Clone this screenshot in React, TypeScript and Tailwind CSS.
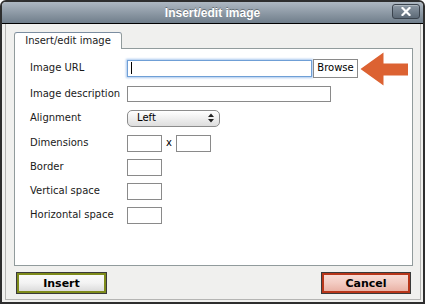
import React from "react";

const font = { fontFamily: '"DejaVu Sans", Verdana, sans-serif' };

function Row({ label, children, className = "" }: { label: string; children?: React.ReactNode; className?: string }) {
  return (
    <div className={`flex items-center h-[24px] ${className}`}>
      <div className="w-[97px] text-[10px] text-[#1a1a1a] leading-none">{label}</div>
      {children}
    </div>
  );
}

function SmallInput() {
  return <div className="w-[35px] h-[17px] border border-[#8a8a8a] bg-white" />;
}

export default function App() {
  return (
    <div className="w-[426px] h-[305px] bg-white" style={font}>
      <div className="relative w-[425px] h-[304px] flex flex-col border-2 border-[#2e2e2e] rounded-t-[6px] overflow-hidden bg-[#f0f0ee]">
        {/* Title bar */}
        <div className="relative h-[22px] shrink-0 flex items-center justify-center border-b border-black bg-gradient-to-b from-[#aeb8c2] to-[#707e8b]">
          <span
            className="text-white font-bold text-[12px] leading-none"
            style={{ fontFamily: '"Liberation Sans", Arial, sans-serif', textShadow: "0 -1px 0 rgba(0,0,0,0.35)" }}
          >
            Insert/edit image
          </span>
          <div className="absolute right-[3px] top-[2px] w-[28px] h-[15px] rounded-[3px] border border-[#3b444e] bg-gradient-to-b from-[#8e9aa6] to-[#5c6976] flex items-center justify-center shadow-[inset_0_1px_0_rgba(255,255,255,0.3)]">
            <svg width="10" height="9" viewBox="0 0 10 9">
              <path d="M1.5 1 L8.5 8 M8.5 1 L1.5 8" stroke="white" strokeWidth="2.2" strokeLinecap="square" />
            </svg>
          </div>
        </div>

        {/* Body */}
        <div className="flex-1 flex flex-col ml-[3px] mr-[2px] mb-[2px] border-l border-r border-b border-[#b5b5b3]">
          <div className="flex flex-col pt-[8px] pl-[8px] pr-[7px]">
            {/* Tab */}
            <div className="relative z-10 -mb-px flex">
              <div className="h-[17px] w-[108px] bg-white border border-b-0 border-[#919b9c] border-t-[#7b8da0] rounded-t-[3px] flex items-center justify-center text-[10px] text-[#1a1a1a] leading-none">
                Insert/edit image
              </div>
            </div>
            {/* Panel */}
            <div className="h-[218px] bg-white border border-[#919b9c] pl-[15px] pt-[7px] flex flex-col">
              <Row label="Image URL">
                <div className="w-[185px] h-[17px] border border-[#6f9fd6] bg-white shadow-[0_0_2px_1px_#a9c8ee] flex items-center pl-[3px]">
                  <div className="w-px h-[12px] bg-black" />
                </div>
                <div className="ml-px w-[45px] h-[19px] border border-[#8a8a8a] bg-white flex items-center justify-center text-[10px] text-black leading-none">
                  Browse
                </div>
              </Row>
              <Row label="Image description" className="mt-[2px]">
                <div className="w-[204px] h-[16px] border border-[#8a8a8a] bg-white" />
              </Row>
              <Row label="Alignment">
                <div className="w-[93px] h-[17px] rounded-[5px] border border-[#8c8c8c] bg-gradient-to-b from-white to-[#dedede] flex items-center justify-between pl-[9px] pr-[5px] text-[10px] text-black leading-none">
                  <span>Left</span>
                  <svg width="6" height="10" viewBox="0 0 6 10">
                    <path d="M0 4 L3 0.5 L6 4 Z M0 6 L3 9.5 L6 6 Z" fill="#222" />
                  </svg>
                </div>
              </Row>
              <Row label="Dimensions" className="mt-px">
                <SmallInput />
                <span className="w-[14px] text-center text-[10px] text-black leading-none">x</span>
                <SmallInput />
              </Row>
              <Row label="Border">
                <SmallInput />
              </Row>
              <Row label="Vertical space">
                <SmallInput />
              </Row>
              <Row label="Horizontal space">
                <SmallInput />
              </Row>
            </div>
            {/* Buttons */}
            <div className="flex justify-between mt-[7px] pl-[3px] pr-[3px]">
              <div className="w-[89px] h-[20px] border-2 border-[#7e8b1b] shadow-[0_0_0_1px_#3a3a3a] bg-gradient-to-b from-[#fbfbfb] via-[#f3f3f3] to-[#dcdcdc] flex items-center justify-center text-[11px] font-bold text-black leading-none">
                Insert
              </div>
              <div className="w-[88px] h-[20px] border-2 border-[#b8361a] shadow-[0_0_0_1px_#3a3a3a] bg-gradient-to-b from-[#f9ddd6] via-[#f3cbc2] to-[#e9b2a6] flex items-center justify-center text-[11px] font-bold text-black leading-none">
                Cancel
              </div>
            </div>
          </div>
        </div>

        {/* Annotation arrow */}
        <svg className="absolute left-[356px] top-[48px]" width="54" height="40" viewBox="358 50 54 40">
          <polygon
            points="360.5,69 383.5,52.5 383.5,63.5 408,63.5 408,75.5 383.5,75.5 383.5,85.5"
            fill="#dc6232"
          />
        </svg>
      </div>
    </div>
  );
}
